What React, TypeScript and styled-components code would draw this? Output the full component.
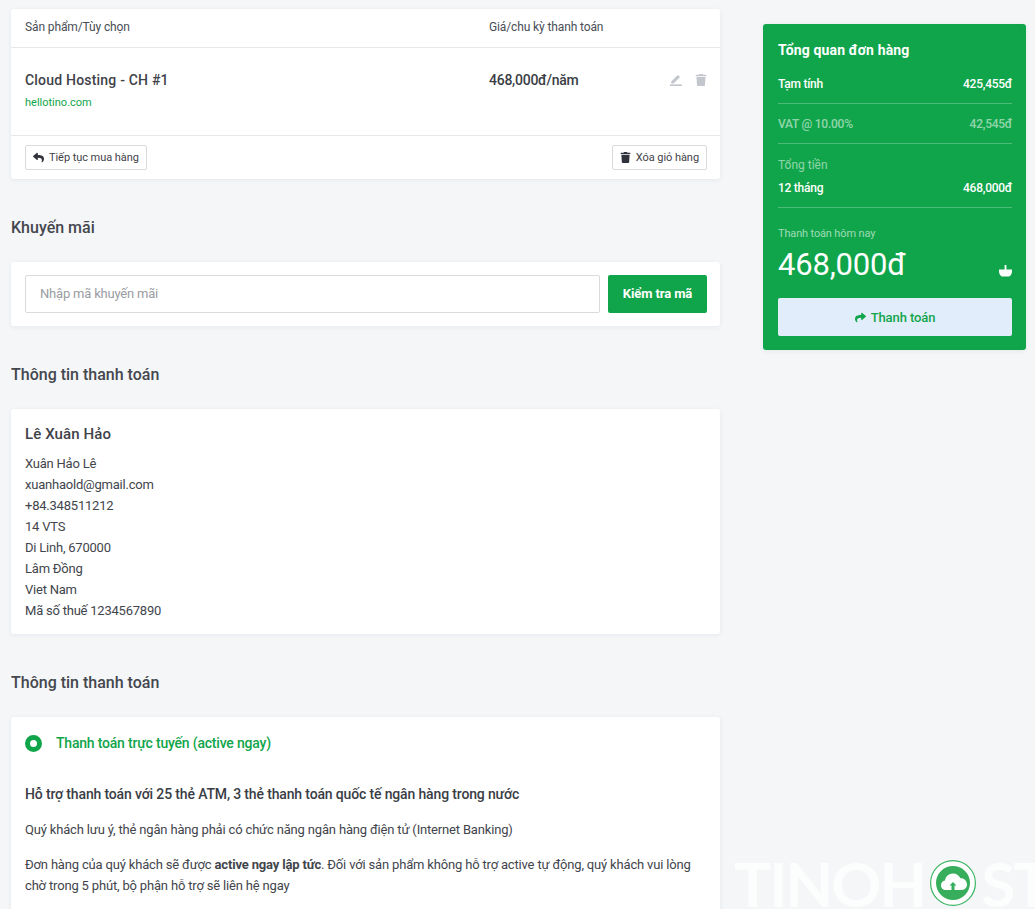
import React, { FC } from "react";
import styled, { createGlobalStyle } from "styled-components";
import { FaReply, FaShare, FaTrash } from "react-icons/fa";

const GlobalStyle = createGlobalStyle`
  html, body {
    margin: 0;
    padding: 0;
    height: 909px;
    overflow: hidden;
    background: #f4f6f8;
    font-family: Roboto, "Liberation Sans", sans-serif;
    color: #3a3d45;
  }
  * { box-sizing: border-box; }
`;

const GREEN = "#10a54a";

const Page = styled.div`
  display: flex;
  align-items: flex-start;
  width: 1035px;
  height: 909px;
  padding: 9px 0 0 11px;
  overflow: hidden;
`;

const Main = styled.div`
  width: 709px;
  flex-shrink: 0;
`;

const Card = styled.section`
  background: #ffffff;
  border-radius: 3px;
  box-shadow: 0 1px 5px rgba(40, 50, 70, 0.07);
`;

const CartHead = styled.div`
  display: grid;
  grid-template-columns: 464px 1fr;
  align-items: center;
  height: 39px;
  padding: 0 14px 2px;
  border-bottom: 1px solid #e6e8ea;
  font-size: 12px;
  letter-spacing: -0.12px;
  color: #4a4d55;
`;

const CartItem = styled.div`
  position: relative;
  display: grid;
  grid-template-columns: 464px 1fr;
  height: 88px;
  padding: 22px 14px 0;
  border-bottom: 1px solid #e6e8ea;
`;

const ItemName = styled.div`
  font-size: 14px;
  line-height: 20px;
  font-weight: 500;
  letter-spacing: 0.2px;
  color: #3f4249;
`;

const ItemDomain = styled.div`
  margin-top: 5px;
  font-size: 11px;
  line-height: 16px;
  color: ${GREEN};
`;

const ItemPrice = styled.div`
  font-size: 14px;
  line-height: 20px;
  font-weight: 500;
  letter-spacing: -0.25px;
  color: #3a3d45;
`;

const ItemActions = styled.div`
  position: absolute;
  right: 13px;
  top: 26px;
  display: flex;
  align-items: center;
  gap: 13px;
  color: #c3c6cd;
`;

const CartFoot = styled.div`
  display: flex;
  justify-content: space-between;
  align-items: center;
  height: 43px;
  padding: 0 13px 0 14px;
`;

const GhostButton = styled.button`
  display: inline-flex;
  align-items: center;
  gap: 5px;
  height: 25px;
  padding: 0 7px 1px;
  background: #ffffff;
  border: 1px solid #d9dbde;
  border-radius: 2px;
  font-family: inherit;
  font-size: 11px;
  color: #3f4249;
  letter-spacing: -0.06px;

  svg {
    font-size: 11px;
    color: #30333b;
  }
`;

const SectionTitle = styled.h2`
  margin: 39px 0 24px;
  font-size: 16px;
  line-height: 20px;
  font-weight: 500;
  color: #44474e;
`;

const PromoCard = styled(Card)`
  display: flex;
  gap: 8px;
  height: 64px;
  padding: 13px 13px 13px 14px;
`;

const PromoInput = styled.input`
  flex: 1;
  height: 38px;
  padding: 0 14px 2px;
  border: 1px solid #d9dbde;
  border-radius: 2px;
  font-family: inherit;
  font-size: 13px;
  letter-spacing: -0.2px;
  outline: none;

  &::placeholder {
    color: #9a9da3;
  }
`;

const PromoButton = styled.button`
  width: 99px;
  height: 38px;
  padding: 0 0 2px;
  border: 0;
  border-radius: 2px;
  background: ${GREEN};
  color: #ffffff;
  font-family: inherit;
  font-size: 13px;
  font-weight: 700;
  letter-spacing: -0.1px;
`;

const BillingCard = styled(Card)`
  height: 225px;
  padding: 15px 14px 0;
`;

const BillingName = styled.div`
  font-size: 15px;
  line-height: 20px;
  font-weight: 500;
  letter-spacing: 0.1px;
  color: #3f4249;
  margin-bottom: 9px;
`;

const BillingLine = styled.div`
  font-size: 13px;
  line-height: 21px;
  letter-spacing: -0.22px;
  color: #42454c;
`;

const PaymentCard = styled(Card)`
  height: 230px;
  padding: 16px 14px 0;
`;

const MethodRow = styled.div`
  display: flex;
  align-items: center;
  gap: 14px;
  height: 20px;
  font-size: 14px;
  font-weight: 500;
  letter-spacing: -0.2px;
  color: ${GREEN};
`;

const RadioDot = styled.span`
  width: 17px;
  height: 17px;
  border-radius: 50%;
  border: 5px solid ${GREEN};
  background: #ffffff;
`;

const PayHeading = styled.p`
  margin: 31px 0 0;
  font-size: 14px;
  line-height: 20px;
  font-weight: 500;
  letter-spacing: -0.15px;
  color: #3a3d45;
`;

const PayText = styled.p<{ $top: number }>`
  margin: ${(p) => p.$top}px 0 0;
  font-size: 13px;
  line-height: 21px;
  letter-spacing: -0.17px;
  color: #42454c;

  strong {
    font-weight: 700;
  }
`;

const Summary = styled.aside`
  width: 263px;
  height: 326px;
  flex-shrink: 0;
  margin: 15px 0 0 43px;
  padding: 16px 14px 0 15px;
  background: ${GREEN};
  border-radius: 3px;
  box-shadow: 0 1px 5px rgba(40, 50, 70, 0.07);
  color: #ffffff;
`;

const SummaryTitle = styled.div`
  margin-bottom: 4px;
  font-size: 14px;
  line-height: 20px;
  font-weight: 700;
  letter-spacing: 0.15px;
`;

const SummaryRow = styled.div<{ $muted?: boolean; $line?: boolean; $height: number }>`
  display: flex;
  justify-content: space-between;
  align-items: center;
  height: ${(p) => p.$height}px;
  font-size: 12px;
  font-weight: 500;
  letter-spacing: -0.25px;
  color: ${(p) => (p.$muted ? "rgba(255,255,255,0.55)" : "#ffffff")};
  border-bottom: ${(p) => (p.$line ? "1px solid rgba(255,255,255,0.25)" : "0")};
`;

const TotalBlock = styled.div`
  padding: 12px 0 5px;
  border-bottom: 1px solid rgba(255, 255, 255, 0.25);
`;

const TotalLabel = styled.div`
  font-size: 12px;
  line-height: 18px;
  color: rgba(255, 255, 255, 0.55);
`;

const TodayLabel = styled.div`
  margin-top: 19px;
  font-size: 11px;
  line-height: 14px;
  letter-spacing: -0.15px;
  color: rgba(255, 255, 255, 0.6);
`;

const TodayRow = styled.div`
  display: flex;
  justify-content: space-between;
  align-items: flex-end;
  height: 40px;
  margin-top: 4px;
  font-size: 31px;
  line-height: 40px;
  letter-spacing: -0.2px;

  svg {
    margin-bottom: 8px;
  }
`;

const CheckoutButton = styled.button`
  display: flex;
  align-items: center;
  justify-content: center;
  gap: 5px;
  width: 234px;
  height: 38px;
  margin-top: 13px;
  border: 0;
  border-radius: 2px;
  background: #e2edfb;
  color: ${GREEN};
  font-family: inherit;
  font-size: 13px;
  font-weight: 500;
  letter-spacing: -0.1px;

  svg {
    font-size: 11px;
  }
`;

const Watermark = styled.div`
  position: fixed;
  left: 734px;
  top: 860px;
  display: flex;
  align-items: center;
  gap: 5px;
  height: 46px;
  font-family: Lato, Roboto, sans-serif;
  font-size: 62px;
  line-height: 46px;
  font-weight: 700;
  letter-spacing: -2px;
  color: rgba(255, 255, 255, 0.75);
  white-space: nowrap;
`;

const billingLines = [
  "Xuân Hảo Lê",
  "xuanhaold@gmail.com",
  "+84.348511212",
  "14 VTS",
  "Di Linh, 670000",
  "Lâm Đồng",
  "Viet Nam",
  "Mã số thuế 1234567890",
];

const App: FC = () => {
  return (
    <Page>
      <GlobalStyle />
      <Main>
        <Card>
          <CartHead>
            <span>Sản phẩm/Tùy chọn</span>
            <span>Giá/chu kỳ thanh toán</span>
          </CartHead>
          <CartItem>
            <div>
              <ItemName>Cloud Hosting - CH #1</ItemName>
              <ItemDomain>hellotino.com</ItemDomain>
            </div>
            <ItemPrice>468,000đ/năm</ItemPrice>
            <ItemActions>
              <svg width="12" height="12" viewBox="0 0 12 12" fill="currentColor">
                <path d="M1.2 7.4 7.8.9l2.3 2L3.6 9.4H1.2z" />
                <rect x="0" y="10.4" width="12" height="1.6" />
              </svg>
              <FaTrash size={12} />
            </ItemActions>
          </CartItem>
          <CartFoot>
            <GhostButton>
              <FaReply />
              Tiếp tục mua hàng
            </GhostButton>
            <GhostButton>
              <FaTrash />
              Xóa giỏ hàng
            </GhostButton>
          </CartFoot>
        </Card>

        <SectionTitle>Khuyến mãi</SectionTitle>
        <PromoCard>
          <PromoInput placeholder="Nhập mã khuyến mãi" />
          <PromoButton>Kiểm tra mã</PromoButton>
        </PromoCard>

        <SectionTitle>Thông tin thanh toán</SectionTitle>
        <BillingCard>
          <BillingName>Lê Xuân Hảo</BillingName>
          {billingLines.map((line) => (
            <BillingLine key={line}>{line}</BillingLine>
          ))}
        </BillingCard>

        <SectionTitle>Thông tin thanh toán</SectionTitle>
        <PaymentCard>
          <MethodRow>
            <RadioDot />
            Thanh toán trực tuyến (active ngay)
          </MethodRow>
          <PayHeading>Hỗ trợ thanh toán với 25 thẻ ATM, 3 thẻ thanh toán quốc tế ngân hàng trong nước</PayHeading>
          <PayText $top={15}>Quý khách lưu ý, thẻ ngân hàng phải có chức năng ngân hàng điện tử (Internet Banking)</PayText>
          <PayText $top={14}>
            Đơn hàng của quý khách sẽ được <strong>active ngay lập tức</strong>. Đối với sản phẩm không hỗ trợ active tự động, quý khách vui lòng chờ trong 5 phút, bộ phận hỗ trợ sẽ liên hệ ngay
          </PayText>
        </PaymentCard>
      </Main>

      <Summary>
        <SummaryTitle>Tổng quan đơn hàng</SummaryTitle>
        <SummaryRow $height={40} $line>
          <span>Tạm tính</span>
          <span>425,455đ</span>
        </SummaryRow>
        <SummaryRow $height={40} $muted $line>
          <span>VAT @ 10.00%</span>
          <span>42,545đ</span>
        </SummaryRow>
        <TotalBlock>
          <TotalLabel>Tổng tiền</TotalLabel>
          <SummaryRow $height={28}>
            <span>12 tháng</span>
            <span>468,000đ</span>
          </SummaryRow>
        </TotalBlock>
        <TodayLabel>Thanh toán hôm nay</TodayLabel>
        <TodayRow>
          <span>468,000đ</span>
          <svg width="13" height="12" viewBox="0 0 13 12" fill="#ffffff">
            <rect x="5.6" y="0" width="1.8" height="5" />
            <path d="M0 4.6h13v1.6c0 3-1.8 5.3-4 5.3H4c-2.2 0-4-2.3-4-5.3z" />
          </svg>
        </TodayRow>
        <CheckoutButton>
          <FaShare />
          Thanh toán
        </CheckoutButton>
      </Summary>

      <Watermark>
        <span>TINOH</span>
        <svg width="46" height="46" viewBox="0 0 46 46">
          <circle cx="23" cy="23" r="22.4" fill="#ffffff" stroke="#3cb563" strokeWidth="1.2" />
          <circle cx="23" cy="23" r="17" fill="#37ae5c" />
          <path
            d="M16 30c-3 0-5-2-5-4.8 0-2.5 1.7-4.4 4-4.8.6-4 3.8-6.9 8-6.9 3.3 0 6 1.8 7.2 4.6 3.6 0 6.8 2.8 6.8 6.5 0 3-2.2 5.4-5.2 5.4z"
            fill="#ffffff"
          />
          <path d="M23 22l-3.5 3.5h2V30h3v-4.5h2z" fill="#37ae5c" />
        </svg>
        <span>ST</span>
      </Watermark>
    </Page>
  );
};

export default App;
